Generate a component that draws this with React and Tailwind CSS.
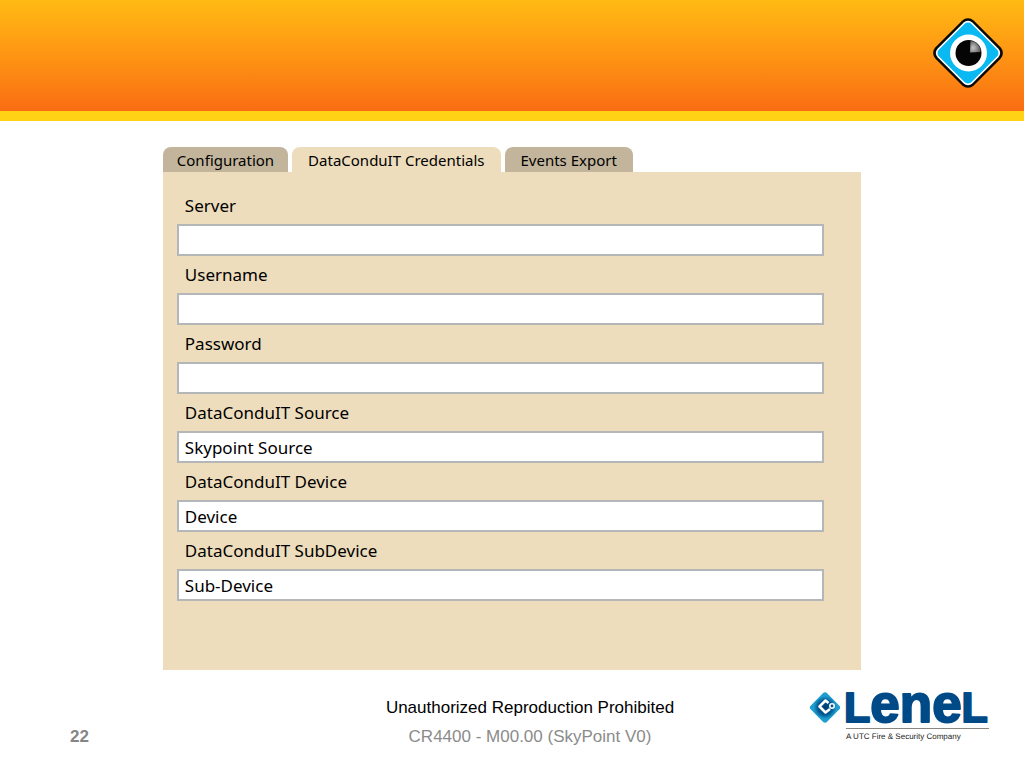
const tabs = ["Configuration", "DataConduIT Credentials", "Events Export"];

const fields = [
  { id: "server", label: "Server", value: "" },
  { id: "username", label: "Username", value: "" },
  { id: "password", label: "Password", value: "", type: "password" },
  { id: "source", label: "DataConduIT Source", value: "Skypoint Source" },
  { id: "device", label: "DataConduIT Device", value: "Device" },
  { id: "subdevice", label: "DataConduIT SubDevice", value: "Sub-Device" },
];

function EyeLogo() {
  return (
    <svg className="h-[72px] w-[72px]" viewBox="0 0 72 72" aria-hidden="true">
      <defs>
        <radialGradient id="glint" cx="0.3" cy="0.6" r="0.7">
          <stop offset="0" stopColor="#c4c4c4" />
          <stop offset="1" stopColor="#5a5a5a" />
        </radialGradient>
      </defs>
      <rect x="9" y="9" width="54" height="54" rx="8" transform="rotate(45 36 36)" fill="#080808" />
      <rect x="11.500" y="11.500" width="49" height="49" rx="6" transform="rotate(45 36 36)" fill="#fff" />
      <rect x="13" y="13" width="46" height="46" rx="5" transform="rotate(45 36 36)" fill="#0bb9f2" />
      <circle cx="36.500" cy="36" r="18.500" fill="#fff" />
      <circle cx="36.500" cy="36" r="13" fill="#050505" />
      <path d="M38 35.500 L38.500 24 Q45 24 48.500 32 L48.500 35 Z" fill="url(#glint)" />
    </svg>
  );
}

function LenelLogo() {
  return (
    <svg className="h-[56px] w-[182px] overflow-visible" viewBox="0 0 182 56" role="img" aria-label="Lenel, A UTC Fire & Security Company">
      <defs>
        <radialGradient id="diamond">
          <stop offset="0" stopColor="#003c78" />
          <stop offset="0.6" stopColor="#00558f" />
          <stop offset="1" stopColor="#1f9fd0" />
        </radialGradient>
      </defs>
      <rect x="5.500" y="7" width="23" height="23" rx="3" transform="rotate(45 17 18.500)" fill="url(#diamond)" />
      <path d="M20.500 14 L17.500 11.500 L11.500 17.500 L17.500 23.500 L22 20" fill="none" stroke="#fff" strokeWidth="2.600" strokeLinejoin="round" />
      <circle cx="24" cy="17" r="2.200" fill="#00558f" stroke="#fff" strokeWidth="1.600" />
      <text x="36" y="33" fill="#004a87" stroke="#004a87" strokeWidth="2" strokeLinejoin="round" className="font-['Liberation_Sans',sans-serif] text-[43px] font-bold">
        L<tspan className="text-[53px]">ene</tspan>L
      </text>
      <path d="M38 39.500 H181" stroke="#8b8580" />
      <text x="38" y="50" fill="#222" textRendering="geometricPrecision" className="font-['Liberation_Sans',sans-serif] text-[8px]">A UTC Fire &amp; Security Company</text>
    </svg>
  );
}

export default function App() {
  return (
    <div className="flex min-h-screen flex-col bg-white font-['Liberation_Sans',Arial,sans-serif]">
      <header className="flex justify-end border-b-[10px] border-[#ffd216] bg-linear-to-b from-[#ffba13] to-[#f96c13] pt-[17px] pr-5 pb-[22px]">
        <EyeLogo />
      </header>

      <main className="mx-auto mt-[26px] w-[68.2%] font-['Noto_Sans',sans-serif] text-black">
        <div role="tablist" className="flex gap-1">
          {tabs.map((tab, i) => (
            <button
              key={tab}
              type="button"
              role="tab"
              aria-selected={i === 1}
              className={
                "h-[25px] rounded-t-lg text-[15px] leading-[26px] " +
                (i === 0 ? "px-[14px] " : "px-4 ") +
                (i === 1 ? "bg-[#edddbc]" : "bg-[#c3b59b]")
              }
            >
              {tab}
            </button>
          ))}
        </div>
        <form className="bg-[#edddbc] pt-[15px] pr-[37px] pb-[69px] pl-[14px]">
          {fields.map((f) => (
            <div key={f.id} className="flex flex-col">
              <label htmlFor={f.id} className="flex h-[37px] items-center px-2 text-[17px]">
                {f.label}
              </label>
              <input
                id={f.id}
                type={f.type || "text"}
                defaultValue={f.value}
                className="h-8 w-full border-2 border-[#b4b7b7] bg-white px-[6px] text-[17px]"
              />
            </div>
          ))}
        </form>
      </main>

      <footer className="mt-[18px] grid grid-cols-[1fr_auto_1fr] items-start pr-[34px] pl-[70px]">
        <div className="mt-[37px] text-[17px] leading-[24px] font-bold text-[#858585]">22</div>
        <div className="mt-2 text-center text-[17px] leading-[24px]">
          <p className="mb-[5px] text-black">Unauthorized Reproduction Prohibited</p>
          <p className="text-[#8b8b8b]">CR4400 - M00.00 (SkyPoint V0)</p>
        </div>
        <div className="mt-px flex justify-end">
          <LenelLogo />
        </div>
      </footer>
    </div>
  );
}
